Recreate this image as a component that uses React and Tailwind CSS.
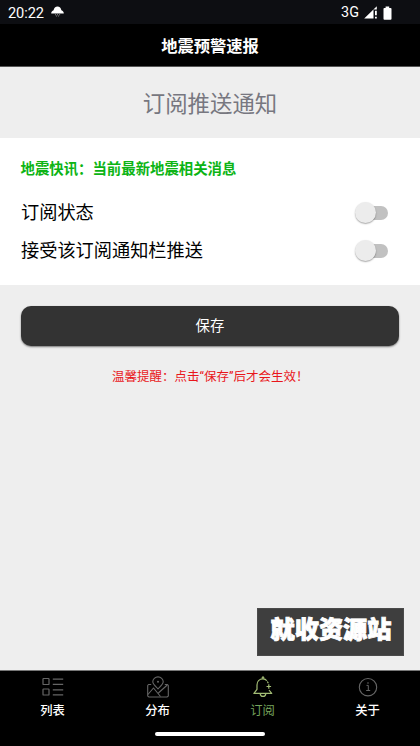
import React from "react";

function StatusBar() {
  return (
    <div className="flex h-6 items-center justify-between bg-[#0d0e12] pl-2 pr-[28px] pt-px text-white">
      <div className="flex items-center">
        <span className="w-[37px] whitespace-nowrap text-[14.6px] leading-6 tracking-[-0.1px]">20:22</span>
        <svg className="ml-[6px] -mt-[3px]" width="13" height="11" viewBox="0 0 13 11" fill="#fff">
          <path d="M.2 7.4C.2 5.900 1.200 4.700 2.600 4.300 2.900 2 4.500.4 6.500.4s3.600 1.600 3.900 3.900c1.400.4 2.400 1.600 2.400 3.100z" />
          <path d="M4 8.300h.9v.9H4zM6.100 8.300H7v.9h-.9zM8.200 8.300h.9v.9h-.9zM5 9.600h.8v.8H5zM7.200 9.600H8v.8h-.8z" opacity=".6" />
        </svg>
      </div>
      <div className="flex items-center">
        <span className="mt-px mr-px text-[14.4px] leading-6">3G</span>
        <svg className="ml-[4px]" width="14" height="13" viewBox="0 0 14 13" fill="#fff">
          <path d="M.2 12.6 12.8.2v3.4H9.5v9z" />
          <path d="M11 4.8h1.8v4.4H11zM11 10.7h1.8v1.9H11z" />
        </svg>
        <svg className="ml-[5px]" width="9" height="14" viewBox="0 0 9 14" fill="#fff">
          <path d="M2.6.4h3.6v1.5h1.4q.9 0 .9.9v10q0 .9-.9.9H1.4q-.9 0-.9-.9v-10q0-.9.9-.9h1.2z" />
        </svg>
      </div>
    </div>
  );
}

function Switch() {
  return (
    <div className="relative h-[22px] w-[33px]">
      <div className="absolute left-[4px] top-[4px] h-[14px] w-[29px] rounded-full bg-[#c1c1c1]" />
      <div className="absolute left-0 top-0 size-[21px] rounded-full bg-[#ececec] shadow-[0_1px_1.5px_rgba(0,0,0,0.35)]" />
    </div>
  );
}

function SettingRow({ label }) {
  return (
    <div className="flex h-[38px] items-center justify-between pl-[21px] pr-[32px]">
      <span className="text-[18.2px] leading-6 text-black">{label}</span>
      <Switch />
    </div>
  );
}

function ListIcon() {
  return (
    <svg width="22" height="22" viewBox="0 0 22 22" fill="none" stroke="currentColor" strokeWidth="1.200">
      <rect x="1" y="2.5" width="6" height="6" rx=".6" />
      <rect x="1" y="13" width="6" height="6" rx=".6" />
      <path d="M10.800 3.2h10.400M10.800 8.300h10.400M10.800 13.800h10.400M10.800 18.800h10.400" />
    </svg>
  );
}

function MapIcon() {
  return (
    <svg width="22" height="22" viewBox="0 0 22 22" fill="none" stroke="currentColor" strokeWidth="1.100" strokeLinejoin="round">
      <path d="M11 12.800C9.200 10.800 5.800 8.200 5.800 5.700a5.200 4.800 0 0 1 10.400 0C16.200 8.200 12.800 10.800 11 12.800z" />
      <circle cx="11" cy="5.800" r="1" fill="currentColor" stroke="none" />
      <path d="M4.200 8.500H1.500L.7 9.500v10.600l1.300.9h18l1.300-.9V9.500l-.8-1h-2.700" />
      <path d="M.9 18.500 6.500 12l7 8.500M11.400 17l8.900-8" />
    </svg>
  );
}

function BellIcon() {
  return (
    <svg width="22" height="22" viewBox="0 0 22 22" fill="none" stroke="currentColor" strokeWidth="1.2" strokeLinejoin="round">
      <path d="M14.800 4.800C13.900 3.400 12.800 2.900 11 2.900 7.300 2.900 5 5.300 5 9v4.300L1.900 17.400h17.800L17 14" />
      <path d="M10.300 2.800V1.300q.7-.7 1.400 0v1.500M8.200 17.600c.3 3.800 5.300 3.800 5.600 0M16.800 8.200v4.600M14.500 10.500h4.600M15.300 5.500l1 1.700" />
    </svg>
  );
}

function InfoIcon() {
  return (
    <svg width="22" height="22" viewBox="0 0 22 22" fill="none" stroke="currentColor">
      <circle cx="11" cy="11.200" r="8.700" strokeWidth="1.100" />
      <path d="M9.500 9.400h1.800v5M9.200 14.500h4" />
      <circle cx="11" cy="7" r=".8" fill="currentColor" stroke="none" />
    </svg>
  );
}

const tabs = [
  { label: "列表", Icon: ListIcon },
  { label: "分布", Icon: MapIcon },
  { label: "订阅", Icon: BellIcon, active: true },
  { label: "关于", Icon: InfoIcon },
];

export default function App() {
  return (
    <div className="relative flex h-[746px] w-[420px] flex-col overflow-hidden bg-[#eeeeee] font-[Roboto,'Noto_Sans_CJK_SC',sans-serif]">
      <StatusBar />
      <header className="flex h-[43px] items-center justify-center border-b border-[#555] bg-black pt-[3px]">
        <h1 className="text-[16.3px] font-bold leading-6 text-white">地震预警速报</h1>
      </header>
      <div className="flex h-[71px] items-center justify-center pt-[2px]">
        <h2 className="text-[22.400px] leading-8 text-[#777780]">订阅推送通知</h2>
      </div>
      <section className="h-[147px] bg-white pt-[20px]">
        <p className="pl-[20.500px] text-[14.400px] font-bold leading-6 text-[#0cb414]">地震快讯：当前最新地震相关消息</p>
        <div className="mt-[12px]">
          <SettingRow label="订阅状态" />
          <SettingRow label="接受该订阅通知栏推送" />
        </div>
      </section>
      <main className="flex flex-1 flex-col px-[21px] pt-[21px]">
        <button className="h-[40px] w-full rounded-[10px] bg-[#333333] pt-[2px] text-[14.400px] text-white shadow-[0_1px_2px_rgba(0,0,0,0.5)]">保存</button>
        <p className="mt-[19px] whitespace-nowrap pl-[91px] text-[12.500px] leading-6 text-[#e9161b]">温馨提醒：点击“保存”后才会生效！</p>
      </main>
      <div className="absolute left-[257px] top-[608px] flex h-[48px] w-[147px] items-start justify-center border border-[#4a4a4a] bg-[#3e3e3e] pl-px pt-[5px]">
        <span className="whitespace-nowrap text-[24.200px] font-black leading-8 text-white [-webkit-text-stroke:0.9px_white]">就收资源站</span>
      </div>
      <nav className="h-[76px] border-t border-[#777] bg-black">
        <div className="grid h-[57px] grid-cols-4">
          {tabs.map(({ label, Icon, active }) => (
            <div key={label} className={active ? "flex flex-col items-center pt-[5px] text-[#a3bd75]" : "flex flex-col items-center pt-[5px] text-[#666666]"}>
              <Icon />
              <span className={active ? "mt-px text-[12.300px] leading-6 text-[#75a45c]" : "mt-px text-[12.300px] font-medium leading-6 text-white"}>{label}</span>
            </div>
          ))}
        </div>
        <div className="mx-auto mt-[4px] h-[4px] w-[110px] rounded-full bg-white" />
      </nav>
    </div>
  );
}
